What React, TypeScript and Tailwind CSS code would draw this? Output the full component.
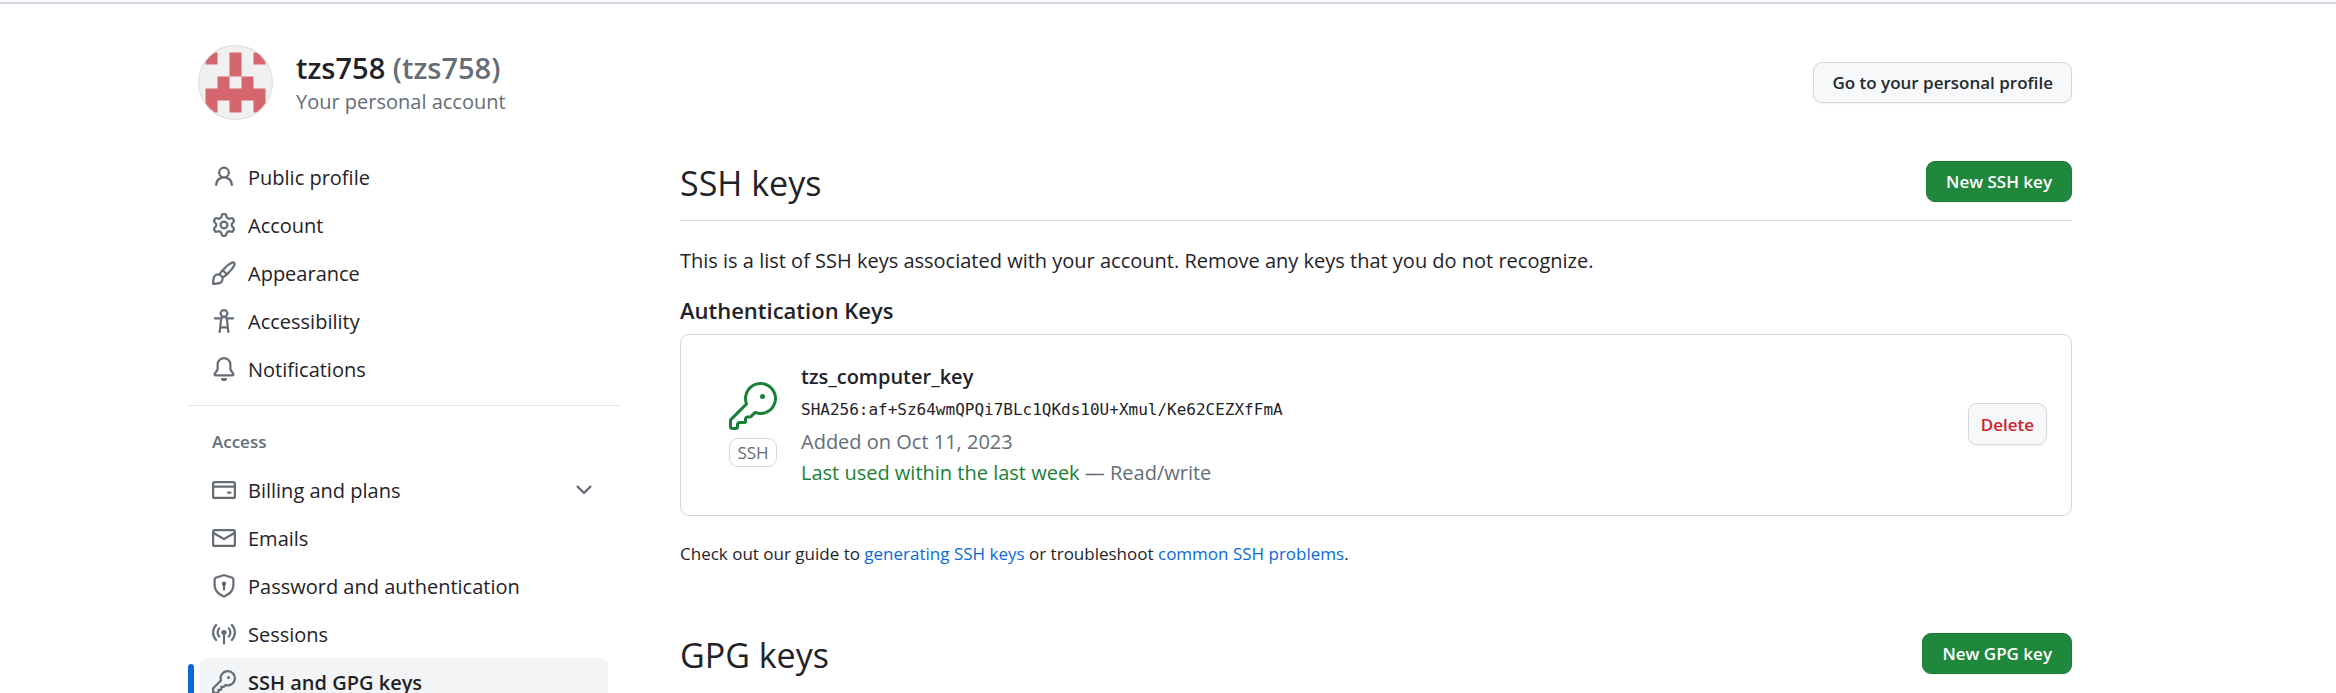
import type { ReactNode } from "react";
import { GoKey } from "react-icons/go";

const icons = {
  person:
    "M10.561 8.073a6.005 6.005 0 0 1 3.432 5.142.75.75 0 1 1-1.498.07 4.5 4.5 0 0 0-8.99 0 .75.75 0 0 1-1.498-.07 6.004 6.004 0 0 1 3.431-5.142 3.999 3.999 0 1 1 5.123 0ZM10.5 5a2.5 2.5 0 1 0-5 0 2.5 2.5 0 0 0 5 0Z",
  gear: "M8 0a8.2 8.2 0 0 1 .701.031C9.444.095 9.99.645 10.16 1.29l.288 1.107c.018.066.079.158.212.224.231.114.454.243.668.386.123.082.233.09.299.071l1.103-.303c.644-.176 1.392.021 1.82.63.27.385.506.792.704 1.218.315.675.111 1.422-.364 1.891l-.814.806c-.049.048-.098.147-.088.294.016.257.016.515 0 .772-.01.147.038.246.088.294l.814.806c.475.469.679 1.216.364 1.891a7.977 7.977 0 0 1-.704 1.217c-.428.61-1.176.807-1.82.63l-1.102-.302c-.067-.019-.177-.011-.3.071a5.909 5.909 0 0 1-.668.386c-.133.066-.194.158-.211.224l-.29 1.106c-.168.646-.715 1.196-1.458 1.26a8.006 8.006 0 0 1-1.402 0c-.743-.064-1.289-.614-1.458-1.26l-.289-1.106c-.018-.066-.079-.158-.212-.224a5.738 5.738 0 0 1-.668-.386c-.123-.082-.233-.09-.299-.071l-1.103.303c-.644.176-1.392-.021-1.82-.63a8.12 8.12 0 0 1-.704-1.218c-.315-.675-.111-1.422.363-1.891l.815-.806c.05-.048.098-.147.088-.294a6.214 6.214 0 0 1 0-.772c.01-.147-.038-.246-.088-.294l-.815-.806C.635 6.045.431 5.298.746 4.623a7.92 7.92 0 0 1 .704-1.217c.428-.61 1.176-.807 1.82-.63l1.102.302c.067.019.177.011.3-.071.214-.143.437-.272.668-.386.133-.066.194-.158.211-.224l.29-1.106C6.009.645 6.556.095 7.299.03 7.53.01 7.764 0 8 0Zm-.571 1.525c-.036.003-.108.036-.137.146l-.289 1.105c-.147.561-.549.967-.998 1.189-.173.086-.34.183-.5.29-.417.278-.97.423-1.529.27l-1.103-.303c-.109-.03-.175.016-.195.045-.22.312-.412.644-.573.99-.014.031-.021.11.059.19l.815.806c.411.406.562.957.53 1.456a4.709 4.709 0 0 0 0 .582c.032.499-.119 1.05-.53 1.456l-.815.806c-.081.08-.073.159-.059.19.162.346.353.677.573.989.02.03.085.076.195.046l1.102-.303c.56-.153 1.113-.008 1.53.27.161.107.328.204.501.29.447.222.85.629.997 1.189l.289 1.105c.029.109.101.143.137.146a6.6 6.6 0 0 0 1.142 0c.036-.003.108-.036.137-.146l.289-1.105c.147-.561.549-.967.998-1.189.173-.086.34-.183.5-.29.417-.278.97-.423 1.529-.27l1.103.303c.109.029.175-.016.195-.045.22-.313.411-.644.573-.99.014-.031.021-.11-.059-.19l-.815-.806c-.411-.406-.562-.957-.53-1.456a4.709 4.709 0 0 0 0-.582c-.032-.499.119-1.05.53-1.456l.815-.806c.081-.08.073-.159.059-.19a6.464 6.464 0 0 0-.573-.989c-.02-.03-.085-.076-.195-.046l-1.102.303c-.56.153-1.113.008-1.53-.27a4.44 4.44 0 0 0-.501-.29c-.447-.222-.85-.629-.997-1.189l-.289-1.105c-.029-.11-.101-.143-.137-.146a6.6 6.6 0 0 0-1.142 0ZM11 8a3 3 0 1 1-6 0 3 3 0 0 1 6 0ZM9.5 8a1.5 1.5 0 1 0-3.001.001A1.5 1.5 0 0 0 9.5 8Z",
  paintbrush:
    "M11.134 1.535c.7-.509 1.416-.942 2.076-1.155.649-.21 1.463-.267 2.069.34.603.601.568 1.411.368 2.07-.202.668-.624 1.39-1.125 2.096-1.011 1.424-2.496 2.987-3.775 4.249-1.098 1.084-2.132 1.839-3.04 2.3a3.744 3.744 0 0 1-1.055 3.217c-.431.431-1.065.691-1.657.861-.614.177-1.294.287-1.914.357A21.151 21.151 0 0 1 .797 16H.743l.007-.75H.749L.742 16a.75.75 0 0 1-.743-.742l.743-.008-.742.007v-.054a21.25 21.25 0 0 1 .13-2.284c.067-.647.187-1.287.358-1.914.17-.591.43-1.226.86-1.657a3.746 3.746 0 0 1 3.227-1.054c.466-.893 1.225-1.907 2.314-2.982 1.271-1.255 2.833-2.75 4.245-3.777ZM1.62 13.089c-.051.464-.086.929-.104 1.395.466-.018.932-.053 1.396-.104a10.511 10.511 0 0 0 1.668-.309c.526-.151.856-.325 1.011-.48a2.25 2.25 0 1 0-3.182-3.182c-.155.155-.329.485-.48 1.01a10.515 10.515 0 0 0-.309 1.67Zm10.396-10.34c-1.224.89-2.605 2.189-3.822 3.384l1.718 1.718c1.21-1.205 2.51-2.597 3.387-3.833.47-.662.78-1.227.912-1.662.134-.444.032-.551.009-.575h-.001V1.78c-.014-.014-.113-.113-.548.027-.432.14-.995.462-1.655.942Zm-4.832 7.266-.001.001a9.859 9.859 0 0 0 1.63-1.142L7.155 7.216a9.7 9.7 0 0 0-1.161 1.607c.482.302.889.71 1.19 1.192Z",
  accessibility:
    "M9.923 5.302c.063.063.122.129.178.198H14A.75.75 0 0 1 14 7h-3.3l.578 5.163.362 2.997a.75.75 0 0 1-1.49.18L9.868 13H6.132l-.282 2.34a.75.75 0 0 1-1.49-.18l.362-2.997L5.3 7H2a.75.75 0 0 1 0-1.5h3.9a2.54 2.54 0 0 1 .176-.198 3 3 0 1 1 3.847 0ZM9.2 7.073h-.001a1.206 1.206 0 0 0-2.398 0L6.305 11.5h3.39ZM9.5 3a1.5 1.5 0 1 0-3.001.001A1.5 1.5 0 0 0 9.5 3Z",
  bell: "M8 16a2 2 0 0 0 1.985-1.75c.017-.137-.097-.25-.235-.25h-3.5c-.138 0-.252.113-.235.25A2 2 0 0 0 8 16ZM3 5a5 5 0 0 1 10 0v2.947c0 .05.015.098.042.139l1.703 2.555A1.519 1.519 0 0 1 13.482 13H2.518a1.516 1.516 0 0 1-1.263-2.36l1.703-2.554A.255.255 0 0 0 3 7.947Zm5-3.5A3.5 3.5 0 0 0 4.5 5v2.947c0 .346-.102.683-.294.97l-1.703 2.556a.017.017 0 0 0-.003.01l.001.006c0 .002.002.004.004.006l.006.004.007.001h10.964l.007-.001.006-.004.004-.006.001-.007a.017.017 0 0 0-.003-.01l-1.703-2.554a1.745 1.745 0 0 1-.294-.97V5A3.5 3.5 0 0 0 8 1.5Z",
  card: "M10.75 9a.75.75 0 0 0 0 1.5h1.5a.75.75 0 0 0 0-1.5h-1.5ZM0 3.75C0 2.784.784 2 1.75 2h12.5c.966 0 1.75.784 1.75 1.75v8.5A1.75 1.75 0 0 1 14.25 14H1.75A1.75 1.75 0 0 1 0 12.25ZM14.5 6.5h-13v5.75c0 .138.112.25.25.25h12.5a.25.25 0 0 0 .25-.25Zm0-2.75a.25.25 0 0 0-.25-.25H1.75a.25.25 0 0 0-.25.25V5h13Z",
  mail: "M1.75 2h12.5c.966 0 1.75.784 1.75 1.75v8.5A1.75 1.75 0 0 1 14.25 14H1.75A1.75 1.75 0 0 1 0 12.25v-8.5C0 2.784.784 2 1.75 2ZM1.5 12.251c0 .138.112.25.25.25h12.5a.25.25 0 0 0 .25-.25V5.809L8.38 9.397a.75.75 0 0 1-.76 0L1.5 5.809v6.442Zm13-8.181v-.32a.25.25 0 0 0-.25-.25H1.75a.25.25 0 0 0-.25.25v.32L8 7.88Z",
  shield:
    "m8.533.133 5.25 1.68A1.75 1.75 0 0 1 15 3.48V7c0 1.566-.32 3.182-1.303 4.682-.983 1.498-2.585 2.813-5.032 3.855a1.697 1.697 0 0 1-1.33 0c-2.447-1.042-4.049-2.357-5.032-3.855C1.32 10.182 1 8.566 1 7V3.48a1.755 1.755 0 0 1 1.217-1.667l5.25-1.68a1.748 1.748 0 0 1 1.066 0Zm-.61 1.429.001.001-5.25 1.68a.251.251 0 0 0-.174.237V7c0 1.36.275 2.666 1.057 3.859.784 1.194 2.121 2.342 4.366 3.298a.196.196 0 0 0 .154 0c2.245-.957 3.582-2.103 4.366-3.297C13.225 9.666 13.5 8.358 13.5 7V3.48a.25.25 0 0 0-.174-.238l-5.25-1.68a.25.25 0 0 0-.153 0ZM9.5 6.5c0 .536-.286 1.032-.75 1.3v2.45a.75.75 0 0 1-1.5 0V7.8A1.5 1.5 0 1 1 9.5 6.5Z",
  broadcast:
    "M8.75 8.582v5.668a.75.75 0 0 1-1.5 0V8.582a1.75 1.75 0 1 1 1.5 0Zm3.983-7.125a.75.75 0 0 1 1.06.026A7.976 7.976 0 0 1 16 7c0 2.139-.84 4.083-2.207 5.517a.75.75 0 1 1-1.086-1.034A6.474 6.474 0 0 0 14.5 7a6.474 6.474 0 0 0-1.793-4.483.75.75 0 0 1 .026-1.06Zm-9.466 0c.3.286.312.76.026 1.06A6.474 6.474 0 0 0 1.5 7a6.47 6.47 0 0 0 1.793 4.483.75.75 0 0 1-1.086 1.034A7.973 7.973 0 0 1 0 7c0-2.139.84-4.083 2.207-5.517a.75.75 0 0 1 1.06-.026Zm8.556 2.321A4.988 4.988 0 0 1 13 7a4.988 4.988 0 0 1-1.177 3.222.75.75 0 1 1-1.146-.967A3.487 3.487 0 0 0 11.5 7c0-.86-.309-1.645-.823-2.255a.75.75 0 0 1 1.146-.967Zm-6.492.958A3.48 3.48 0 0 0 4.5 7a3.48 3.48 0 0 0 .823 2.255.75.75 0 0 1-1.146.967A4.981 4.981 0 0 1 3 7a4.982 4.982 0 0 1 1.188-3.236.75.75 0 1 1 1.143.972Z",
  key: "M10.5 0a5.499 5.499 0 1 1-1.288 10.848l-.932.932a.749.749 0 0 1-.53.22H7v.75a.749.749 0 0 1-.22.53l-.5.5a.749.749 0 0 1-.53.22H5v.75a.749.749 0 0 1-.22.53l-.5.5a.749.749 0 0 1-.53.22h-2A1.75 1.75 0 0 1 0 14.25v-2c0-.199.079-.389.22-.53l4.932-4.932A5.5 5.5 0 0 1 10.5 0Zm-4 5.5c-.001.431.069.86.205 1.269a.75.75 0 0 1-.181.768L1.5 12.56v1.69c0 .138.112.25.25.25h1.69l.06-.06v-1.19a.75.75 0 0 1 .75-.75h1.19l.06-.06v-1.19a.75.75 0 0 1 .75-.75h1.19l1.023-1.025a.75.75 0 0 1 .768-.18A4 4 0 1 0 6.5 5.5ZM11 6a1 1 0 1 1 0-2 1 1 0 0 1 0 2Z",
  chevron:
    "M12.78 5.22a.749.749 0 0 1 0 1.06l-4.25 4.25a.749.749 0 0 1-1.06 0L3.22 6.28a.749.749 0 1 1 1.06-1.06L8 8.939l3.72-3.719a.749.749 0 0 1 1.06 0Z",
};

type IconName = keyof typeof icons;

function Icon({ name }: { name: IconName }) {
  return (
    <svg viewBox="0 0 16 16" className="size-6 shrink-0 fill-[#656d76]" aria-hidden="true">
      <path d={icons[name]} />
    </svg>
  );
}

interface Item {
  label: string;
  icon: IconName;
  expandable?: boolean;
  current?: boolean;
}

const accountItems: Item[] = [
  { label: "Public profile", icon: "person" },
  { label: "Account", icon: "gear" },
  { label: "Appearance", icon: "paintbrush" },
  { label: "Accessibility", icon: "accessibility" },
  { label: "Notifications", icon: "bell" },
];

const accessItems: Item[] = [
  { label: "Billing and plans", icon: "card", expandable: true },
  { label: "Emails", icon: "mail" },
  { label: "Password and authentication", icon: "shield" },
  { label: "Sessions", icon: "broadcast" },
  { label: "SSH and GPG keys", icon: "key", current: true },
];

function NavItem({ item }: { item: Item }) {
  const row = "flex h-12 w-full items-center gap-3 rounded-[9px] px-3 text-left";
  if (item.expandable) {
    return (
      <li className="px-3">
        <button type="button" className={row} aria-expanded="false">
          <Icon name={item.icon} />
          <span className="grow">{item.label}</span>
          <Icon name="chevron" />
        </button>
      </li>
    );
  }
  return (
    <li className="relative px-3">
      {item.current && <span className="absolute top-1.5 left-0 h-9 w-1.5 rounded-[9px] bg-[#0969da]" />}
      <a
        href="#"
        aria-current={item.current ? "page" : undefined}
        className={item.current ? `${row} bg-[#f3f4f6] font-semibold` : row}
      >
        <Icon name={item.icon} />
        <span>{item.label}</span>
      </a>
    </li>
  );
}

function Avatar() {
  return (
    <svg viewBox="0 0 75 75" className="size-[75px] shrink-0" role="img" aria-label="@tzs758">
      <defs>
        <clipPath id="round">
          <circle cx="37.5" cy="37.5" r="36.5" />
        </clipPath>
      </defs>
      <circle cx="37.5" cy="37.5" r="37.5" fill="#dcdddf" />
      <g clipPath="url(#round)">
        <rect width="75" height="75" fill="#f0f0f0" />
        <path
          fill="#d5666e"
          d="M7.500 7.500h12v12h-12zM31.500 7.500h12v24h-12zM55.500 7.500h12v12h-12zM19.500 31.500h12v12h12v-12h12v12h12v24h-12v-12h-12v12h-12v-12h-12v12h-12v-24h12z"
        />
      </g>
    </svg>
  );
}

function PrimaryButton({ children }: { children: ReactNode }) {
  return (
    <button
      type="button"
      className="h-[41px] shrink-0 rounded-[9px] border border-[#1f7a38] bg-[#1f883d] px-[19px] text-[17px] font-semibold text-white shadow-xs"
    >
      {children}
    </button>
  );
}

export default function App() {
  return (
    <div className="min-h-screen bg-white font-['Open_Sans','Noto_Sans',sans-serif] text-[20px] leading-[31px] text-[#1f2328]">
      <div className="h-1 border-b-2 border-[#d0d7de] bg-[#f6f8fa]" />

      <div className="pr-[264px] pl-[188px]">
        <header className="flex items-center justify-between pt-[41px] pl-[10px]">
          <div className="flex items-center gap-[23px]">
            <Avatar />
            <div>
              <h1 className="text-[29px] leading-[37px] font-semibold">
                tzs758 <span className="text-[#656d76]">(tzs758)</span>
              </h1>
              <p className="text-[#656d76]">Your personal account</p>
            </div>
          </div>
          <a
            href="#"
            className="flex h-[41px] items-center rounded-[9px] border border-[#d5d8da] bg-[#f6f8fa] px-[18px] text-[17px] font-semibold text-[#24292f] shadow-xs"
          >
            Go to your personal profile
          </a>
        </header>

        <div className="flex gap-[60px] pt-[33px]">
          <nav className="w-[432px] shrink-0" aria-label="Settings">
            <ul>
              {accountItems.map((item) => (
                <NavItem key={item.label} item={item} />
              ))}
            </ul>
            <div className="mt-3 border-t border-[#e4e7eb]" />
            <h2 className="px-6 pt-5 pb-[9px] text-[17px] font-semibold text-[#656d76]">Access</h2>
            <ul>
              {accessItems.map((item) => (
                <NavItem key={item.label} item={item} />
              ))}
            </ul>
          </nav>

          <main className="min-w-0 grow pt-2">
            <div className="flex h-[60px] items-start justify-between border-b border-[#d8dee4]">
              <h2 className="text-[34px] leading-[44px]">SSH keys</h2>
              <PrimaryButton>New SSH key</PrimaryButton>
            </div>
            <p className="pt-6">
              This is a list of SSH keys associated with your account. Remove any keys that you do not recognize.
            </p>
            <h3 className="pt-4 text-[22px] leading-9 font-semibold">Authentication Keys</h3>

            <section className="mt-1.5 flex items-center justify-between rounded-[9px] border border-[#d0d7de] pt-[25px] pb-[27px] pr-6 pl-12">
              <div className="flex items-center gap-6">
                <div className="flex flex-col items-center gap-2">
                  <GoKey className="size-12 text-[#1a7f37]" />
                  <span className="rounded-[9px] border border-[#d0d7de] px-[7px] text-[17px] leading-[27px] text-[#656d76]">
                    SSH
                  </span>
                </div>
                <div>
                  <p className="leading-[33px] font-semibold">tzs_computer_key</p>
                  <code className="block font-['DejaVu_Sans_Mono',monospace] text-[16px] leading-[33px]">
                    SHA256:af+Sz64wmQPQi7BLc1QKds10U+Xmul/Ke62CEZXfFmA
                  </code>
                  <p className="text-[#656d76]">Added on Oct 11, 2023</p>
                  <p className="text-[#656d76]">
                    <span className="text-[#1a7f37]">Last used within the last week</span> — Read/write
                  </p>
                </div>
              </div>
              <button
                type="button"
                className="h-[42px] shrink-0 rounded-[9px] border border-[#d5d8da] bg-[#f6f8fa] px-3 text-[17px] font-semibold text-[#cf222e] shadow-xs"
              >
                Delete
              </button>
            </section>

            <p className="pt-6 text-[17px] leading-7">
              Check out our guide to{" "}
              <a href="#" className="text-[#0969da]">
                generating SSH keys
              </a>{" "}
              or troubleshoot{" "}
              <a href="#" className="text-[#0969da]">
                common SSH problems
              </a>
              .
            </p>

            <div className="flex items-start justify-between pt-[65px]">
              <h2 className="text-[34px] leading-[44px]">GPG keys</h2>
              <PrimaryButton>New GPG key</PrimaryButton>
            </div>
          </main>
        </div>
      </div>
    </div>
  );
}
